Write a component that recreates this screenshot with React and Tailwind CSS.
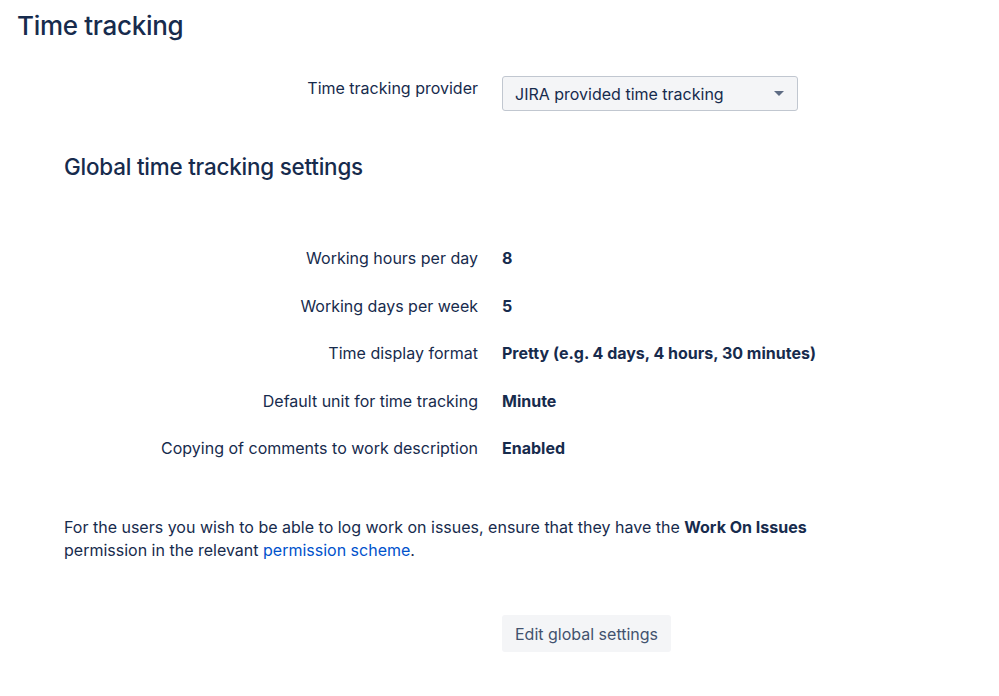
export default function App() {
  const rows = [
    ["Working hours per day", "8"],
    ["Working days per week", "5"],
    ["Time display format", "Pretty (e.g. 4 days, 4 hours, 30 minutes)"],
    ["Default unit for time tracking", "Minute"],
    ["Copying of comments to work description", "Enabled"],
  ];
  return (
    <div
      className="min-h-[696px] w-[999px] bg-white text-[#172B4D]"
      style={{ fontFamily: "Inter, 'Noto Sans', sans-serif" }}
    >
      <h1 className="pl-[17px] pt-[9px] text-[26px] font-medium leading-[34px] tracking-[-0.3px]">
        Time tracking
      </h1>
      <div className="mt-[33px] flex items-start">
        <div className="mt-[2px] w-[478px] text-right text-[16px] leading-[20px]">Time tracking provider</div>
        <div className="ml-[24px] flex h-[35px] w-[296px] items-center justify-between rounded-[3px] border border-[#C1C7D0] bg-[#F4F5F7] pl-[12px] pr-[12px] text-[16px] text-[#172B4D]">
          <span>JIRA provided time tracking</span>
          <svg width="10" height="6" viewBox="0 0 10 6" className="mr-[1px]">
            <path d="M0 0 L10 0 L5 5 Z" fill="#5E6C84" />
          </svg>
        </div>
      </div>
      <h2 className="ml-[64px] mt-[42px] text-[22.4px] font-medium leading-[28px] tracking-[-0.2px]">
        Global time tracking settings
      </h2>
      <div className="mt-[67px] flex flex-col gap-[27.5px]">
        {rows.map(([k, v]) => (
          <div key={k} className="flex items-center text-[16px] leading-[20px]">
            <div className="w-[478px] text-right">{k}</div>
            <div className="ml-[24px] font-bold">{v}</div>
          </div>
        ))}
      </div>
      <p className="ml-[64px] mt-[58px] w-[780px] text-[16px] leading-[23px]">
        For the users you wish to be able to log work on issues, ensure that they have the{" "}
        <b className="font-bold">Work On Issues</b> permission in the relevant{" "}
        <a className="text-[#0052CC]">permission scheme</a>.
      </p>
      <div className="mt-[53px] flex">
        <button className="ml-[502px] h-[37px] rounded-[3px] bg-[#F4F5F7] px-[13px] text-[16px] text-[#42526E]">
          Edit global settings
        </button>
      </div>
    </div>
  );
}
